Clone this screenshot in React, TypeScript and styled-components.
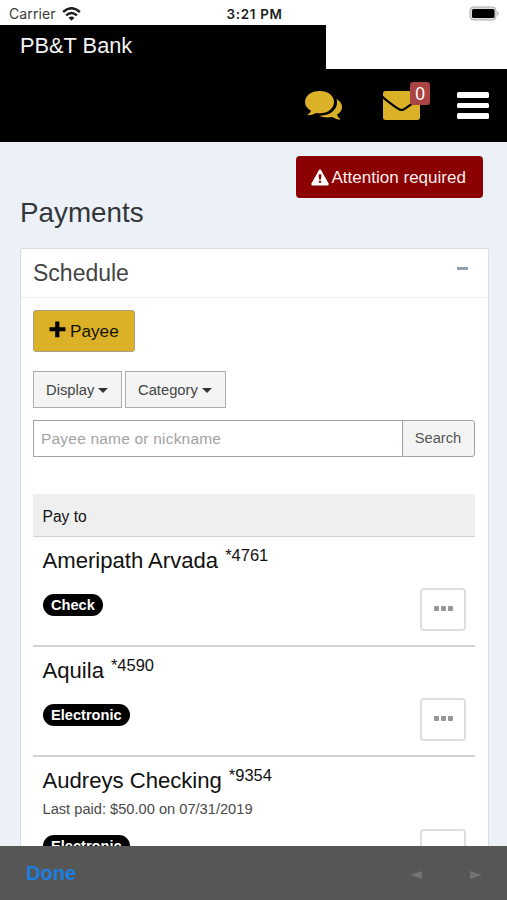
import React from "react";
import styled, { createGlobalStyle } from "styled-components";

const GlobalStyle = createGlobalStyle`
  *, *::before, *::after { box-sizing: border-box; }
  body { margin: 0; background: #ecf0f7; overflow: hidden; }
  button, input { font: inherit; margin: 0; }
`;

const Screen = styled.div`
  width: 507px;
  height: 900px;
  display: flex;
  flex-direction: column;
  overflow: hidden;
  font-family: "Liberation Sans", Arial, sans-serif;
  color: #111;
  background: #ecf0f7;
`;

const StatusBar = styled.div`
  flex: none;
  height: 25px;
  display: grid;
  grid-template-columns: 1fr auto 1fr;
  align-items: center;
  padding: 2px 7px 0 9px;
  background: #fff;
  font-family: Inter, sans-serif;
  font-size: 13.4px;
`;

const Carrier = styled.div`
  display: flex;
  align-items: center;
  gap: 6px;
  color: #3a3a3a;
  font-size: 14px;
  letter-spacing: 0.1px;
`;

const Clock = styled.div`
  font-weight: 600;
  letter-spacing: 0.7px;
  color: #1c1c1c;
`;

const BatterySlot = styled.div`
  display: flex;
  justify-content: flex-end;
`;

const Brand = styled.div`
  flex: none;
  height: 44px;
  background: #fff;
`;

const BrandName = styled.div`
  width: 326px;
  height: 100%;
  padding: 8px 20px 0;
  background: #000;
  color: #f4f4f4;
  font-size: 21.8px;
  line-height: 26px;
`;

const NavBar = styled.nav`
  flex: none;
  height: 73px;
  display: flex;
  justify-content: flex-end;
  align-items: center;
  padding: 0 18px 0 0;
  background: #000;
  color: #dbb127;
`;

const NavItem = styled.div<{ $gap?: number }>`
  position: relative;
  display: flex;
  margin-left: ${(p) => p.$gap ?? 0}px;
`;

const Count = styled.span`
  position: absolute;
  left: 27px;
  top: -9px;
  width: 20px;
  height: 23px;
  border-radius: 3px;
  background: #a94442;
  color: #fff;
  font-size: 17.5px;
  line-height: 24px;
  text-align: center;
`;

const MenuLines = styled.div`
  width: 32px;
  display: grid;
  gap: 5px;
`;

const MenuLine = styled.span`
  height: 5.6px;
  border-radius: 1.5px;
  background: #fff;
`;

const Content = styled.main`
  flex: 1;
  min-height: 0;
  display: flex;
  flex-direction: column;
  padding: 14px 18px 0 20px;
  overflow: hidden;
`;

const Alert = styled.button`
  flex: none;
  align-self: flex-end;
  display: flex;
  align-items: center;
  gap: 3px;
  width: 187px;
  height: 42px;
  margin-right: 6.5px;
  padding: 1px 0 0 15px;
  border: 0;
  border-radius: 4px;
  background: #8b0000;
  color: #f9eeee;
  font-size: 17.05px;
  white-space: nowrap;
`;

const Title = styled.h1`
  flex: none;
  height: 50px;
  margin: 0;
  font-size: 27.8px;
  font-weight: 400;
  line-height: 30px;
  color: #333639;
`;

const Panel = styled.section`
  flex: none;
  border: 1px solid #d8dce2;
  border-radius: 2px;
  background: #fff;
`;

const PanelHead = styled.header`
  height: 49px;
  display: flex;
  justify-content: space-between;
  padding: 0 20px 0 12px;
  border-bottom: 1px solid #eee;
`;

const PanelTitle = styled.h2`
  margin: 0;
  font-size: 23px;
  font-weight: 400;
  line-height: 48px;
  color: #444;
`;

const Collapse = styled.span`
  width: 11px;
  height: 3px;
  margin-top: 18px;
  background: #97a0b3;
`;

const PanelBody = styled.div`
  padding: 12px 13px 0 12px;
`;

const AddPayee = styled.button`
  display: flex;
  align-items: center;
  gap: 4px;
  width: 102px;
  height: 42px;
  padding: 0 0 0 15px;
  border: 1px solid #aaa08a;
  border-radius: 3px;
  background: #dbb127;
  color: #141207;
  font-size: 17.2px;
`;

const Filters = styled.div`
  display: flex;
  gap: 3px;
  margin-top: 19px;
`;

const Filter = styled.button<{ $width: number }>`
  width: ${(p) => p.$width}px;
  height: 37px;
  display: flex;
  align-items: center;
  gap: 4px;
  padding: 0 0 0 12px;
  border: 1px solid #adadad;
  background: #f4f4f4;
  color: #444;
  font-size: 14.75px;
`;

const Caret = styled.span`
  width: 0;
  border: 5px solid transparent;
  border-top-color: #333;
  border-bottom: 0;
  margin-top: 2px;
`;

const SearchRow = styled.div`
  display: flex;
  height: 37px;
  margin-top: 12px;
`;

const SearchInput = styled.input`
  flex: 1;
  min-width: 0;
  padding: 1px 7px 0;
  border: 1px solid #a2a2a2;
  border-right: 0;
  border-radius: 0;
  background: #fff;
  font-size: 15.5px;
  letter-spacing: 0.2px;
  &::placeholder { color: #a3a3a3; opacity: 1; }
`;

const SearchButton = styled.button`
  width: 73px;
  padding: 0 1px 1px 0;
  border: 1px solid #a2a2a2;
  border-radius: 0 3px 3px 0;
  background: #f4f4f4;
  color: #555;
  font-size: 14.7px;
`;

const ListHead = styled.div`
  height: 43px;
  margin-top: 37px;
  padding-left: 9.5px;
  background: #efefef;
  border-bottom: 1px solid #d2d2d2;
  font-size: 15.6px;
  line-height: 45px;
`;

const PayeeRow = styled.article<{ $tall?: boolean }>`
  height: ${(p) => (p.$tall ? 132 : 110)}px;
  display: flex;
  justify-content: space-between;
  padding: 10px 9px 0 9.5px;
  border-bottom: 2px solid #d2d2d2;
`;

const PayeeInfo = styled.div`
  display: flex;
  flex-direction: column;
  align-items: flex-start;
`;

const PayeeName = styled.div`
  display: flex;
  gap: 7px;
  height: 28px;
  font-size: 22.1px;
  line-height: 28px;
  white-space: nowrap;
`;

const Mask = styled.span`
  font-size: 16.5px;
  line-height: 16px;
`;

const LastPaid = styled.div`
  height: 22px;
  font-size: 14.65px;
  line-height: 28px;
  color: #4a4a4a;
  white-space: nowrap;
`;

const Method = styled.span<{ $tall?: boolean }>`
  height: 22px;
  margin-top: ${(p) => (p.$tall ? 18 : 19)}px;
  padding: 0 8.5px;
  border-radius: 11px;
  background: #000;
  color: #fff;
  font-size: 14.6px;
  font-weight: 700;
  line-height: 22px;
`;

const MoreButton = styled.button<{ $tall?: boolean }>`
  width: 46px;
  height: 43px;
  display: flex;
  align-items: center;
  justify-content: center;
  gap: 2px;
  margin-top: ${(p) => (p.$tall ? 62 : 41)}px;
  padding: 0 0 3px;
  border: 2px solid #dedede;
  border-radius: 4px;
  background: #fff;
`;

const Dot = styled.span`
  width: 5px;
  height: 5px;
  border-radius: 1px;
  background: #969696;
`;

const BottomBar = styled.footer`
  flex: none;
  height: 54px;
  display: flex;
  align-items: center;
  justify-content: space-between;
  padding: 0 25px 0 26px;
  background: #565656;
`;

const Done = styled.span`
  color: #1b7fe0;
  font-size: 20.1px;
  font-weight: 700;
`;

const Arrows = styled.div`
  display: flex;
  gap: 48px;
  margin-top: 3px;
`;

const Wifi = () => (
  <svg width="19" height="14" viewBox="0 0 19 14" fill="none" stroke="#1d1d1d" strokeWidth="2.4">
    <path d="M1.1 5 Q9.5 -2.6 17.9 5" />
    <path d="M4.1 8.3 Q9.5 3.5 14.9 8.3" />
    <path d="M6.5 10.8 Q9.5 8.1 12.5 10.8 L9.5 13.8Z" fill="#1d1d1d" stroke="none" />
  </svg>
);

const Battery = () => (
  <svg width="31" height="15" viewBox="0 0 31 15">
    <rect x="1" y="1" width="26" height="13" rx="3.5" fill="#ddd" stroke="#adadad" />
    <rect x="3" y="3" width="22.5" height="9" rx="1.5" fill="#000" />
    <path d="M28.4 5 Q31 7.5 28.4 10Z" fill="#aaa" />
  </svg>
);

const Comments = () => (
  <svg width="37" height="29" viewBox="0 0 111 87" fill="currentColor">
    <path d="M44 0C69 0 87 14 87 33S69 67 44 67Q38 67 33 66Q22 73 9 73Q7 71 9 70Q16 65 18 59Q0 49 0 33C0 14 19 0 44 0Z" />
    <path d="M95 24Q112 35 111 49Q111 62 96 71Q98 78 105 83Q106 86 103 86Q92 85 82 78Q57 82 42 74Q68 75 84 61Q100 46 95 24Z" />
  </svg>
);

const Envelope = () => (
  <svg width="37" height="29" viewBox="0 0 111 87">
    <rect width="111" height="87" rx="8" fill="currentColor" />
    <path d="M-3 16Q12 31 45 53Q55.500 61 66 53Q99 31 114 16" fill="none" stroke="#000" strokeWidth="6.500" />
  </svg>
);

const Warning = () => (
  <svg width="18" height="17" viewBox="0 0 18 17">
    <path d="M8 .9 Q9 -.4 10 .9 L17.6 14.6 Q18 16.3 16.6 16.4 H1.4 Q0 16.3 .4 14.6Z" fill="#fff" />
    <path d="M7.7 5.2h2.6v3l-.7 2.5H8.4l-.7-2.5zM7.8 11.8h2.4v2H7.8z" fill="#8b0000" />
  </svg>
);

const Plus = () => (
  <svg width="17" height="20" viewBox="0 0 17 20">
    <path d="M6.2.5h4.2v5.8h6.1v4h-6.1v5.9H6.200v-5.9H.5v-4h5.7z" fill="#000" />
  </svg>
);

const Arrow = ({ right }: { right?: boolean }) => (
  <svg width="12" height="8" viewBox="0 0 12 8">
    <path d={right ? "M0 0L12 4L0 8Z" : "M12 0L0 4L12 8Z"} fill="#737373" />
  </svg>
);

const payees = [
  { name: "Ameripath Arvada", mask: "*4761", method: "Check" },
  { name: "Aquila", mask: "*4590", method: "Electronic" },
  { name: "Audreys Checking", mask: "*9354", method: "Electronic", lastPaid: "Last paid: $50.00 on 07/31/2019" },
];

export default function App() {
  return (
    <Screen>
      <GlobalStyle />
      <StatusBar>
        <Carrier>Carrier <Wifi /></Carrier>
        <Clock>3:21 PM</Clock>
        <BatterySlot><Battery /></BatterySlot>
      </StatusBar>
      <Brand><BrandName>PB&amp;T Bank</BrandName></Brand>
      <NavBar>
        <NavItem><Comments /></NavItem>
        <NavItem $gap={41}><Envelope /><Count>0</Count></NavItem>
        <NavItem $gap={37}>
          <MenuLines><MenuLine /><MenuLine /><MenuLine /></MenuLines>
        </NavItem>
      </NavBar>
      <Content>
        <Alert><Warning />Attention required</Alert>
        <Title>Payments</Title>
        <Panel>
          <PanelHead><PanelTitle>Schedule</PanelTitle><Collapse /></PanelHead>
          <PanelBody>
            <AddPayee><Plus />Payee</AddPayee>
            <Filters>
              <Filter $width={89}>Display<Caret /></Filter>
              <Filter $width={100.5}>Category<Caret /></Filter>
            </Filters>
            <SearchRow>
              <SearchInput placeholder="Payee name or nickname" />
              <SearchButton>Search</SearchButton>
            </SearchRow>
            <ListHead>Pay to</ListHead>
            {payees.map((p) => (
              <PayeeRow key={p.name} $tall={!!p.lastPaid}>
                <PayeeInfo>
                  <PayeeName>{p.name}<Mask>{p.mask}</Mask></PayeeName>
                  {p.lastPaid && <LastPaid>{p.lastPaid}</LastPaid>}
                  <Method $tall={!!p.lastPaid}>{p.method}</Method>
                </PayeeInfo>
                <MoreButton $tall={!!p.lastPaid}><Dot /><Dot /><Dot /></MoreButton>
              </PayeeRow>
            ))}
          </PanelBody>
        </Panel>
      </Content>
      <BottomBar>
        <Done>Done</Done>
        <Arrows><Arrow /><Arrow right /></Arrows>
      </BottomBar>
    </Screen>
  );
}
